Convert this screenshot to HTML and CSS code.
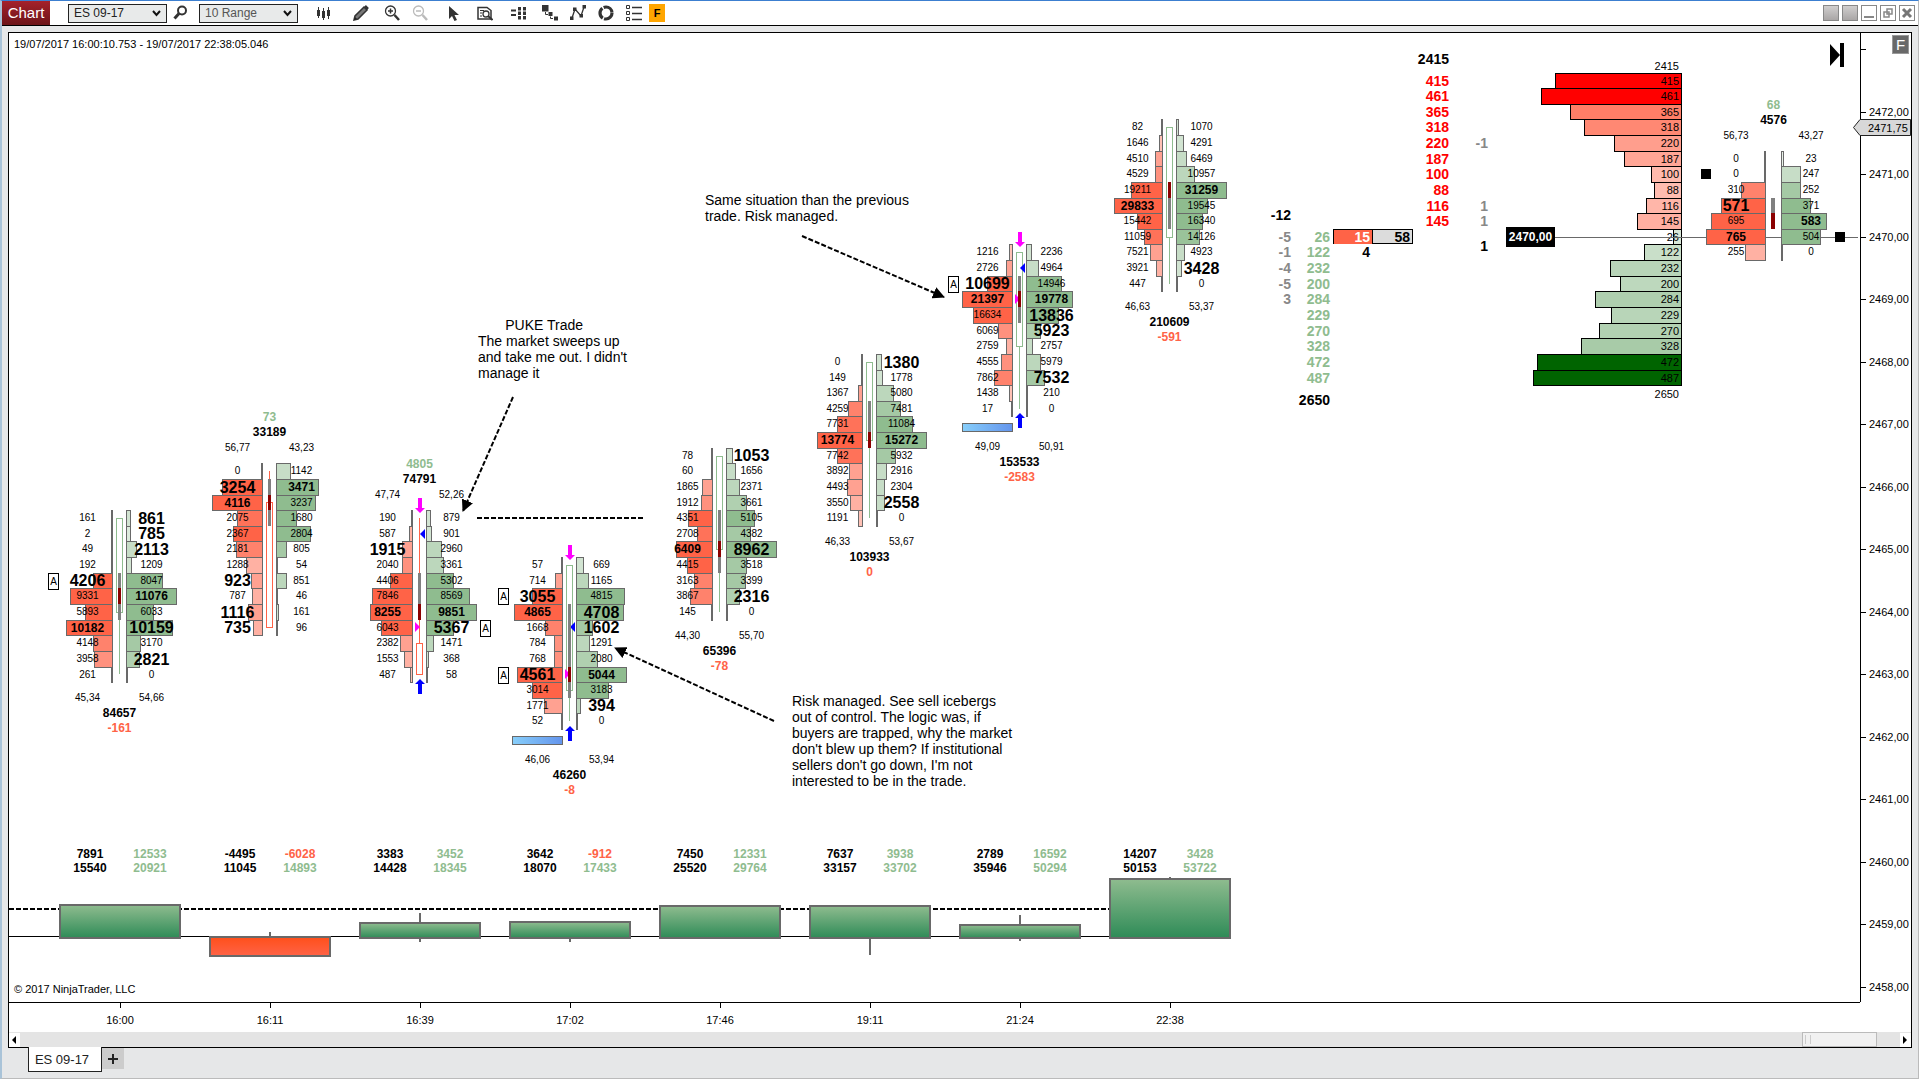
FILE: index.html
```html
<!DOCTYPE html>
<html lang="en">
<head>
    <meta charset="UTF-8">
    <meta name="viewport" content="width=device-width, initial-scale=1.0">
    <title>Chart - ES 09-17</title>
    <link rel="stylesheet" href="styles.css">
</head>
<body>
    <header class="toolbar">
        <h1 class="title">Chart</h1>
        <label class="dropdown instrument">
            <select aria-label="Instrument"><option>ES 09-17</option></select>
            <svg width="9" height="7" viewBox="0 0 9 7"><path d="M1 1l3.5 4L8 1" fill="none" stroke="#111" stroke-width="2"/></svg>
        </label>
        <button class="tool" aria-label="Search">
            <svg viewBox="0 0 16 16"><circle cx="10" cy="5.5" r="4" fill="none" stroke="#333" stroke-width="2"/><path d="M7 8.5L2.5 13.5" stroke="#333" stroke-width="3"/></svg>
        </button>
        <label class="dropdown range">
            <select aria-label="Interval"><option>10 Range</option></select>
            <svg width="9" height="7" viewBox="0 0 9 7"><path d="M1 1l3.5 4L8 1" fill="none" stroke="#111" stroke-width="2"/></svg>
        </label>

        <div class="tools">
            <button class="tool" aria-label="Chart style">
                <svg viewBox="0 0 16 16"><path d="M2.5 2v11M7.5 3v12M12.5 2v12" stroke="#333" stroke-width="1"/><path d="M2.5 5v6M7.5 6v7M12.5 5v6" stroke="#333" stroke-width="3"/></svg>
            </button>
            <button class="tool space-l" aria-label="Draw">
                <svg viewBox="0 0 16 16"><path d="M1 15l1-4 9-9 3 3-9 9z" fill="#777" stroke="#333" stroke-width="1.5"/><path d="M12 1l3 3" stroke="#333" stroke-width="2.5"/><path d="M1 15l1-3 2 2z" fill="#222"/></svg>
            </button>
            <button class="tool space-s" aria-label="Zoom in">
                <svg viewBox="0 0 16 16"><circle cx="6.5" cy="6" r="5" fill="none" stroke="#333" stroke-width="1.3"/><path d="M6.5 3.5v5M4 6h5" stroke="#333" stroke-width="1.5"/><path d="M10.5 10l4.5 5" stroke="#333" stroke-width="2.5"/></svg>
            </button>
            <button class="tool" aria-label="Zoom out" disabled>
                <svg viewBox="0 0 16 16"><circle cx="6.5" cy="6" r="5" fill="none" stroke="#bbb" stroke-width="1.3"/><path d="M4 6h5" stroke="#bbb" stroke-width="1.5"/><path d="M10.5 10l4.5 5" stroke="#bbb" stroke-width="2.5"/></svg>
            </button>
            <button class="tool space-m" aria-label="Cursor">
                <svg viewBox="0 0 16 16"><path d="M3 1v13l3-3 2.500 5 2.500-1-2.500-5H13z" fill="#333"/></svg>
            </button>
            <button class="tool space-s" aria-label="Data box">
                <svg viewBox="0 0 16 16"><path d="M1 2.5h9l4 3V14H1z" fill="none" stroke="#333" stroke-width="1.5"/><path d="M3 5.5h4M3 8h2M3 11h2" stroke="#333"/><circle cx="9" cy="9" r="3" fill="#fff" stroke="#333" stroke-width="1.3"/><path d="M11 11l4.5 4" stroke="#333" stroke-width="2"/></svg>
            </button>
            <button class="tool space-m" aria-label="Data series">
                <svg viewBox="0 0 16 16"><path d="M0 5.5h5M0 10h5" stroke="#333" stroke-width="2"/><path d="M8.500 2v13M13.500 2v13" stroke="#333" stroke-width="3" stroke-dasharray="3.500 1"/></svg>
            </button>
            <button class="tool space-s" aria-label="Strategies">
                <svg viewBox="0 0 16 16"><path d="M0 0h6.5v6.5H0zM6.500 7h4v4h-4zM12 11.5h4v4h-4z" fill="#333"/><path d="M3.5 7v2.5H6M8.500 11.500v2H11" fill="none" stroke="#333"/></svg>
            </button>
            <button class="tool" aria-label="Indicators">
                <svg viewBox="0 0 16 16"><path d="M2 13L5 4l6 7 3-9" fill="none" stroke="#333" stroke-width="1.3"/><path d="M0 11.500h3.500V15H0zM3 2.500h3.500V6H3zM9.500 9H13v3.500H9.500zM12.500 0H16v3.500h-3.500z" fill="#333"/></svg>
            </button>
            <button class="tool" aria-label="Sync">
                <svg viewBox="0 0 16 16"><circle cx="8" cy="8" r="6" fill="none" stroke="#333" stroke-width="3.2" stroke-dasharray="11.2 1.36"/></svg>
            </button>
            <button class="tool" aria-label="Properties">
                <svg viewBox="0 0 16 16"><path d="M.5.5h3v3h-3zM.5 6.5h3v3h-3zM.5 12.5h3v3h-3z" fill="none" stroke="#333"/><path d="M6 2.5h10M6 8.5h10M6 14.5h10" stroke="#333" stroke-width="1.5"/></svg>
            </button>
            <button class="flag">F</button>
        </div>

        <div class="window-buttons">
            <button class="shade" aria-label="Link colour"></button>
            <button class="shade" aria-label="Interval link"></button>
            <button aria-label="Minimize"><svg viewBox="0 0 12 12"><path d="M1 10h10" stroke="#888" stroke-width="2"/></svg></button>
            <button aria-label="Restore"><svg viewBox="0 0 12 12"><path d="M5 2h5v5H5zM2 5h5v5H2z" fill="none" stroke="#888" stroke-width="1.5"/></svg></button>
            <button aria-label="Close"><svg viewBox="0 0 12 12"><path d="M2 2l8 8M10 2l-8 8" stroke="#777" stroke-width="3"/></svg></button>
        </div>
    </header>

    <main class="workspace">
        <div class="frame">
            <section class="plot" id="plot">
                <p class="range-label">19/07/2017 16:00:10.753 - 19/07/2017 22:38:05.046</p>

                <!-- Drawing tools: arrows and dashed level -->
                <svg class="drawings">
                    <defs>
                        <marker id="head" markerUnits="userSpaceOnUse" markerWidth="12" markerHeight="12" refX="11" refY="6" orient="auto">
                            <path d="M0 0l12 6-12 6z"/>
                        </marker>
                    </defs>
                    <g stroke="#000" stroke-width="2" stroke-dasharray="5 2">
                        <path d="M793 203L935 264" marker-end="url(#head)"/>
                        <path d="M504 364L454 478" marker-end="url(#head)"/>
                        <path d="M765 688L606 615" marker-end="url(#head)"/>
                        <path d="M468 485H636"/>
                    </g>
                </svg>
                <p class="note note-puke">       PUKE Trade
The market sweeps up
and take me out. I didn't
manage it</p>
                <p class="note note-same">Same situation than the previous
trade. Risk managed.</p>
                <p class="note note-risk">Risk managed. See sell icebergs
out of control. The logic was, if
buyers are trapped, why the market
don't blew up them? If institutional
sellers don't go down, I'm not
interested to be in the trade.</p>

                <button class="go-last" aria-label="Go to last bar">
                    <svg width="14" height="24" viewBox="0 0 14 24"><path d="M0 1l10 11L0 23zM10 0h4v24h-4z"/></svg>
                </button>

                <section class="delta-panel">
                    <div class="columns" id="deltas"></div>
                    <svg class="delta-bars" id="deltaBars"></svg>
                    <p class="copyright">© 2017 NinjaTrader, LLC</p>
                </section>
            </section>

            <aside class="price-axis" id="priceAxis">
                <button class="fixed-scale">F</button>
                <div class="last-price">
                    <svg viewBox="0 0 58 17"><path d="M.5 8.5L7 .5h50.5v16H7z" fill="#d8d8d8" stroke="#222"/></svg>
                    <span>2471,75</span>
                </div>
            </aside>

            <div class="time-axis columns" id="timeAxis"></div>

            <div class="scrollbar">
                <button aria-label="Scroll left"><svg viewBox="0 0 10 14"><path d="M7 3v8L3 7z"/></svg></button>
                <div class="thumb"></div>
                <button aria-label="Scroll right"><svg viewBox="0 0 10 14"><path d="M3 3v8l4-4z"/></svg></button>
            </div>
        </div>
    </main>

    <footer class="tabs">
        <button class="tab">ES 09-17</button>
        <button class="add-tab" aria-label="Add tab"><svg viewBox="0 0 10 10"><path d="M5 0v10M0 5h10" stroke="#222" stroke-width="2"/></svg></button>
    </footer>

    <script src="chart.js"></script>
</body>
</html>
```

FILE: styles.css
```css
* {
    margin: 0;
    padding: 0;
    box-sizing: border-box;
    font-family: "Liberation Sans", Arial, sans-serif;
}

body {
    display: flex;
    flex-direction: column;
    height: 100vh;
    border-top: 1px solid #3c7fd0;
    border-right: 1px solid #bbb;
    border-bottom: 1px solid #bbb;
    border-left: 2px solid #a9c3d8;
    background-color: #e6e7e8;
    color: #000;
    font-size: 11px;
    overflow: hidden;
}

button {
    border: none;
    background: none;
}

svg {
    display: block;
}

/* Toolbar */
.toolbar {
    display: flex;
    align-items: center;
    height: 25px;
    background-color: #fff;
    border-bottom: 1px solid #000;
}

.title {
    align-self: stretch;
    width: 48px;
    margin-right: 18px;
    background: linear-gradient(#a5222b, #6d1418);
    color: #fff;
    font-size: 15px;
    font-weight: normal;
    line-height: 24px;
    text-align: center;
}

.dropdown {
    display: grid;
    align-items: center;
    width: 99px;
    height: 19px;
}

.dropdown select,
.dropdown svg {
    grid-area: 1 / 1;
}

.dropdown select {
    width: 100%;
    height: 19px;
    padding-left: 5px;
    appearance: none;
    border: 1px solid #222;
    border-radius: 0;
    background-color: #e8eaea;
    color: #222;
    font-size: 12px;
}

.dropdown svg {
    justify-self: end;
    margin-right: 6px;
    pointer-events: none;
}

.range select {
    color: #555;
}

.instrument + .tool {
    margin: 0 11px 0 5px;
}

.tool,
.tool svg {
    width: 16px;
    height: 16px;
}

.tools {
    display: flex;
    align-items: center;
    gap: 12px;
    margin-left: 18px;
}

.space-s {
    margin-left: 3px;
}

.space-m {
    margin-left: 6px;
}

.space-l {
    margin-left: 9px;
}

.flag {
    width: 16px;
    height: 18px;
    margin-left: -5px;
    background-color: #ffa500;
    font-size: 11px;
    font-weight: bold;
}

.window-buttons {
    display: flex;
    gap: 3px;
    margin-left: auto;
    margin-right: 3px;
}

.window-buttons button {
    width: 16px;
    height: 16px;
    padding: 1px;
    border: 1px solid #888;
}

.window-buttons .shade {
    background: linear-gradient(#d0cece, #a9a6a6);
}

/* Workspace */
.workspace {
    display: flex;
    flex: 1;
    min-height: 0;
    padding: 6px 6px 0;
}

.frame {
    flex: 1;
    display: grid;
    grid-template-columns: 1fr 51px;
    grid-template-rows: 1fr 30px 15px;
    border: 1px solid #000;
    background-color: #fff;
}

.plot {
    position: relative;
    display: flex;
    flex-direction: column;
    justify-content: space-between;
    min-width: 0;
    overflow: hidden;
}

.range-label {
    padding: 4px 5px;
    line-height: 14px;
}

.columns {
    display: grid;
    grid-template-columns: repeat(8, 150px);
    padding-left: 36px;
}

/* Drawings */
.drawings {
    position: absolute;
    inset: 0;
    width: 100%;
    height: 100%;
}

.note {
    position: absolute;
    font-size: 14px;
    line-height: 16px;
    white-space: pre;
}

.note-puke {
    left: 469px;
    top: 284px;
}

.note-same {
    left: 696px;
    top: 159px;
}

.note-risk {
    left: 783px;
    top: 660px;
}

.go-last {
    position: absolute;
    top: 10px;
    right: 16px;
}

/* Footprint bars */
.footprint {
    --side: 51px;
    position: absolute;
    width: 143px;
}

.footprint.wide {
    --side: 60px;
    width: 163px;
}

.above {
    margin-top: -53px;
}

.ladder-rows,
.percents {
    display: grid;
    grid-template-columns: 14px var(--side) 1fr var(--side) 14px;
}

.percents {
    padding-bottom: 1px;
    font-size: 10px;
    line-height: 15px;
    text-align: center;
}

.summary {
    display: flex;
    flex-direction: column;
    padding-top: 8px;
}

.above .summary {
    flex-direction: column-reverse;
    padding: 0 0 7px;
}

.percents :first-child {
    grid-column: 2;
}

.percents :last-child {
    grid-column: 4;
}

.total,
.delta {
    font-size: 12px;
    font-weight: bold;
    line-height: 15px;
    text-align: center;
}

.up {
    color: #8fbc8f;
}

.down {
    color: #ff6347;
}

.bid,
.ask {
    display: grid;
    grid-template-rows: 100%;
    align-items: center;
    font-size: 10px;
}

.bid {
    grid-column: 2;
}

.ask {
    grid-column: 4;
}

.bid span,
.ask span,
.bid i,
.ask i {
    grid-area: 1 / 1;
}

.bid span,
.ask span {
    z-index: 1;
    justify-self: center;
    line-height: 16px;
}

.bid i,
.ask i {
    align-self: stretch;
    margin-bottom: -1px;
    min-width: 2px;
    border: 1px solid #696969;
}

.bid i {
    justify-self: end;
}

.medium {
    font-size: 12px;
    font-weight: bold;
}

.large {
    padding-top: 1px;
    font-size: 16px;
    font-weight: bold;
}

.absorb {
    width: 11px;
    height: 17px;
    border: 1px solid #000;
    background-color: #fff;
    font-size: 10px;
    line-height: 15px;
    text-align: center;
}

.absorb.left {
    grid-column: 1;
}

.absorb.right {
    grid-column: 5;
    justify-self: end;
}

.candle {
    grid-column: 3;
    grid-row: 1 / -1;
    justify-self: center;
    width: 13px;
    height: 100%;
    overflow: visible;
}

.iceberg {
    width: 51px;
    height: 9px;
    margin: -1px 0 7px 14px;
    border: 1px solid #696969;
    background: linear-gradient(to right, #87cefa, #6495ed);
}

/* Order book profile */
.profile {
    position: absolute;
    right: 178px;
    line-height: 14px;
    text-align: right;
    margin-top: -14px;
}

.profile .rows {
    display: grid;
    justify-items: end;
}

.profile .end {
    padding-right: 3px;
}

.profile .bar {
    margin-bottom: -1px;
    border: 1px solid #000;
    display: flex;
    justify-content: flex-end;
    padding-right: 2px;
}

.profile .rows + .end {
    padding-top: 2px;
}

/* Depth of market */
.depth {
    position: absolute;
    right: 372px;
    margin-top: -22px;
    font-size: 14px;
    font-weight: bold;
    line-height: 16px;
    text-align: right;
}

.depth .row {
    display: grid;
    grid-template-columns: 40px 39px 83px 36px 39px;
}

.depth .total-row {
    height: 22px;
}

.depth .last-row {
    padding-top: 7px;
}

.change {
    color: #888;
}

.offer {
    color: #f00;
}

.sum {
    margin-top: -6px;
    color: #000;
}

.traded {
    display: grid;
    grid-template-columns: 1fr 1fr;
    margin-left: 3px;
    border: 1px solid #000;
    background-color: #dcdcdc;
    line-height: 14px;
}

.traded span {
    padding-right: 2px;
}

.traded span:first-child {
    border-right: 1px solid #000;
    background-color: #ff6347;
    color: #fff;
}

.trades {
    padding-right: 43px;
}

.price-line {
    position: absolute;
    right: 2px;
    width: 352px;
    display: flex;
    align-items: center;
    margin-top: -10px;
}

.price-line span {
    width: 49px;
    background-color: #000;
    color: #fff;
    font-size: 12px;
    font-weight: bold;
    line-height: 20px;
    text-align: center;
}

.price-line::after {
    content: "";
    flex: 1;
    border-top: 1px solid #696969;
}

.order {
    position: absolute;
    width: 10px;
    height: 10px;
    margin-top: -5px;
    background-color: #000;
}

/* Cumulative delta */
.delta-panel {
    height: 155px;
}

.delta-values {
    display: grid;
    grid-template-columns: 60px 60px;
    justify-content: center;
    font-size: 12px;
    font-weight: bold;
    line-height: 14px;
    text-align: center;
}

.delta-bars {
    width: 100%;
    height: 107px;
}

.copyright {
    padding-left: 5px;
    line-height: 14px;
}

/* Axes */
.price-axis {
    position: relative;
    border-left: 1px solid #000;
}

.price {
    position: absolute;
    left: 0;
    display: flex;
    align-items: center;
    gap: 3px;
    height: 14px;
    margin-top: -7px;
}

.price::before {
    content: "";
    width: 5px;
    border-top: 1px solid #000;
}

.last-price {
    position: absolute;
    top: 86px;
    right: 0;
    width: 58px;
}

.last-price svg,
.last-price span {
    width: 58px;
    height: 17px;
}

.last-price span {
    position: absolute;
    top: 0;
    padding-left: 15px;
    line-height: 18px;
}

.fixed-scale {
    position: absolute;
    top: 2px;
    right: 2px;
    width: 17px;
    height: 19px;
    border: 1px solid #999;
    background-color: #696969;
    color: #fff;
    font-size: 15px;
    line-height: 17px;
}

.time-axis {
    border-top: 1px solid #000;
    text-align: center;
}

.time-axis span::before {
    content: "";
    display: block;
    width: 1px;
    height: 5px;
    margin: 0 auto 6px;
    background-color: #000;
}

.scrollbar {
    grid-column: 1 / -1;
    display: flex;
    align-items: center;
    background-color: #e4e4e4;
}

.scrollbar button {
    width: 11px;
    height: 14px;
    background-color: #fff;
}

.scrollbar svg {
    height: 14px;
}

.thumb {
    width: 75px;
    height: 15px;
    margin: 0 23px 0 auto;
    padding: 2px;
    border: 1px solid #bbb;
    background-color: #f1f1f1;
}

.thumb::before {
    content: "";
    display: block;
    width: 4px;
    height: 9px;
    border-left: 1px solid #ccc;
    border-right: 1px solid #ccc;
}

/* Tabs */
.tabs {
    display: flex;
    align-items: flex-start;
    height: 30px;
    padding-left: 26px;
}

.tab {
    width: 74px;
    height: 25px;
    margin-top: -1px;
    padding-right: 6px;
    border: 1px solid #222;
    border-top: none;
    background-color: #fff;
    color: #222;
    font-size: 13px;
}

.add-tab {
    display: grid;
    place-items: center;
    width: 22px;
    height: 21px;
    background-color: #ccc;
}

.add-tab svg {
    width: 10px;
}
```

FILE: chart.js
```javascript
const POINT = 62.53;      // pixels per price point
const TICK = 0.25;
const TOP_PRICE = 2472;
const TOP_Y = 78.6;       // centre of TOP_PRICE inside the plot
const FIRST_X = 111;
const STEP_X = 150;

const plot = document.getElementById('plot');

const priceY = price => Math.round(TOP_Y + (TOP_PRICE - price) * POINT);
const rowTop = price => Math.round(TOP_Y + (TOP_PRICE - price - TICK / 2) * POINT);

function rowHeights(top, count) {
    const heights = [];
    for (let i = 0; i < count; i++) {
        heights.push(rowTop(top - (i + 1) * TICK) - rowTop(top - i * TICK) + 'px');
    }
    return heights.join(' ');
}

// Cell format: volume, size (M or L), fill strength after the colon.
// body / wick / area / poc are row numbers counted from the top price.
const bars = [
    { time: '16:00', top: 2465.5, total: 84657, delta: -161, pct: ['45,34', '54,66'], body: [0, 6], wick: [6, 10], up: true, area: [4, 7], poc: 5, absorb: { 4: 'left' },
      rows: ['161 861L:4', '2 785L:3', '49 2113L:5', '192 1209:4', '4206L:10 8047:10', '9331:10 11076M:10', '5893:10 6033:10', '10182M:10 10159L:10', '4148:8 3170:8', '3958:7 2821L:7', '261 0'] },
    { time: '16:11', top: 2466.25, total: 33189, delta: 73, pct: ['56,77', '43,23'], body: [2, 10], wick: [0, 2], up: false, area: [1, 4], poc: 2,
      rows: ['0 1142:5', '3254L:10 3471M:10', '4116M:10 3237:10', '2075:9 1680:10', '2367:10 2804:10', '2181:8 805:8', '1288:5 54', '923L:6 851:6', '787:5 46', '1116L:6 161:4', '735L:5 96'] },
    { time: '16:39', top: 2465.5, total: 74791, delta: 4805, pct: ['47,74', '52,26'], body: [8, 10], wick: [0, 8], up: false, area: [4, 7], poc: 6, buy: 1, sell: 7, arrows: true, absorb: { 7: 'right' },
      rows: ['190 879:4', '587:5 901:4', '1915L:6 2960:6', '2040:7 3361:6', '4406:10 5302:10', '7846:10 8569:10', '8255M:10 9851M:10', '6043:10 5367L:10', '2382:6 1471:6', '1553:5 368:4', '487:4 58'] },
    { time: '17:02', top: 2464.75, total: 46260, delta: -8, pct: ['46,06', '53,94'], body: [0, 8], wick: [8, 10], up: true, area: [3, 9], poc: 7, buy: 4, sell: 7, arrows: true, iceberg: true, absorb: { 2: 'left', 7: 'left' },
      rows: ['57 669:4', '714:6 1165:6', '3055L:10 4815:10', '4865M:10 4708L:10', '1668:8 1602L:8', '784:7 1291:6', '768:7 2080:7', '4561L:10 5044M:10', '3014:10 3183:10', '1771:6 394L:6', '52 0'] },
    { time: '17:46', top: 2466.5, total: 65396, delta: -78, pct: ['44,30', '55,70'], body: [0, 6], wick: [6, 10], up: true, area: [4, 8], poc: 6,
      rows: ['78 1053L:4', '60 1656:5', '1865:6 2371:6', '1912:7 3661:7', '4351:10 5105:10', '2708:9 4382:8', '6409M:10 8962L:10', '4415:10 3518:8', '3163:8 3399:8', '3867:8 2316L:7', '145 0'] },
    { time: '19:11', top: 2468, total: 103933, delta: 0, pct: ['46,33', '53,67'], body: [0, 5], wick: [5, 10], up: true, area: [3, 6], poc: 5,
      rows: ['0 1380L:4', '149 1778:4', '1367:6 5080:6', '4259:8 7481:8', '7731:9 11084:10', '13774M:10 15272M:10', '7742:9 5932:8', '3892:6 2916:5', '4493:6 2304:5', '3550:5 2558L:5', '1191:4 0'] },
    { time: '21:24', top: 2469.75, total: 153533, delta: -2583, pct: ['49,09', '50,91'], body: [0, 6], wick: [6, 10], up: true, area: [2, 5], poc: 3, buy: 1, sell: 3, arrows: true, iceberg: true, absorb: { 2: 'left' },
      rows: ['1216:4 2236:4', '2726:6 4964:5', '10699L:10 14946:10', '21397M:10 19778M:10', '16634:10 13836L:10', '6069:7 5923L:7', '2759:5 2757:5', '4555:7 5979:6', '7862:8 7532L:8', '1438:4 210', '17 0'] },
    { time: '22:38', top: 2471.75, total: 210609, delta: -591, pct: ['46,63', '53,37'], body: [0, 7], wick: [7, 10], up: true, area: [4, 7], poc: 4,
      rows: ['82 1070:4', '1646:4 4291:4', '4510:6 6469:5', '4529:7 10957:6', '19211:10 31259M:10', '29833M:10 19545:10', '15442:10 16340:10', '11059:9 14126:9', '7521:6 4923:5', '3921:5 3428L:4', '447 0'] }
];

// Bar in progress, kept at the right edge
const current = { top: 2471.25, total: 4576, delta: 68, pct: ['56,73', '43,27'], area: [3, 5], poc: 4, wide: true,
    rows: ['0 23:2', '0 247:5', '310:8 252:8', '571L:10 371:10', '695:10 583M:10', '765M:10 504:10', '255:5 0'] };

function parseCell(text) {
    const [, value, size, tone] = text.match(/^(\d+)([ML]?):?(\d*)$/);
    return { value: Number(value), size: { M: 'medium', L: 'large' }[size] || '', tone: Number(tone) / 10 };
}

function cellHtml(cell, side, row, max, width) {
    const color = side === 'bid' ? '255, 99, 71' : '143, 188, 143';
    const barWidth = Math.round(cell.value / max * width) + 1;
    return `<div class="${side}" style="grid-row: ${row + 1}">
        <i style="width: ${barWidth}px; background-color: rgba(${color}, ${cell.tone})"></i>
        <span class="${cell.size}">${cell.value}</span>
    </div>`;
}

function candleSvg(bar) {
    const base = rowTop(bar.top);
    const top = row => rowTop(bar.top - row * TICK) - base;
    const mid = row => priceY(bar.top - row * TICK) - base;
    const end = top(bar.rows.length);
    const color = bar.up ? '#8fbc8f' : '#ff6347';
    const areaX = bar.wide ? 4 : 5;
    const areaWidth = bar.wide ? 4 : 3;
    let svg = '';
    if (bar.body) {
        svg += `<path d="M6.5 ${mid(bar.wick[0])}V${mid(bar.wick[1])}" stroke="${color}"/>`;
        svg += `<rect x="3.5" y="${mid(bar.body[0]) + 0.5}" width="6" height="${mid(bar.body[1]) - mid(bar.body[0])}" fill="#fff" stroke="${color}"/>`;
    }
    if (bar.sell) svg += `<path d="M2 ${mid(bar.sell) - 5}l5 5-5 5z" fill="#f0f"/>`;
    if (bar.buy) svg += `<path d="M12 ${mid(bar.buy) - 5}l-5 5 5 5z" fill="#00f"/>`;
    svg += `<rect x="${areaX}" y="${top(bar.area[0])}" width="${areaWidth}" height="${top(bar.area[1]) - top(bar.area[0])}" fill="#808080"/>`;
    svg += `<rect x="${areaX}" y="${top(bar.poc)}" width="${areaWidth}" height="${top(bar.poc + 1) - top(bar.poc)}" fill="#8b0000"/>`;
    if (bar.arrows) {
        svg += '<path d="M5-12h4V-2h3L7 3 2-2h3z" fill="#f0f"/>';
        svg += `<path d="M5 ${end + 12}h4V${end + 2}h3l-5-5-5 5h3z" fill="#00f"/>`;
    }
    return `<svg class="candle">${svg}</svg>`;
}

function addFootprint(bar, side, offset) {
    const cells = bar.rows.map(row => row.split(' ').map(parseCell));
    const max = Math.max(...cells.flat().map(cell => cell.value));
    const width = bar.wide ? 59 : 50;
    const above = bar.delta > 0;

    let grid = cells.map(([bid, ask], i) => cellHtml(bid, 'bid', i, max, width) + cellHtml(ask, 'ask', i, max, width)).join('');
    for (const row in bar.absorb) {
        grid += `<div class="absorb ${bar.absorb[row]}" style="grid-row: ${Number(row) + 1}">A</div>`;
    }
    const rows = `<div class="ladder-rows" style="grid-template-rows: ${rowHeights(bar.top, cells.length)}">${grid}${candleSvg(bar)}</div>`;
    const summary = `<div class="summary">
        ${bar.iceberg ? '<div class="iceberg"></div>' : ''}
        <div class="percents"><span>${bar.pct[0]}</span><span>${bar.pct[1]}</span></div>
        <div class="total">${bar.total}</div>
        <div class="delta ${above ? 'up' : 'down'}">${bar.delta}</div>
    </div>`;

    const el = document.createElement('article');
    el.className = 'footprint' + (above ? ' above' : '') + (bar.wide ? ' wide' : '');
    el.style.top = rowTop(bar.top) + 'px';
    el.style[side] = offset + 'px';
    el.innerHTML = above ? summary + rows : rows + summary;
    plot.appendChild(el);
}

// Order book, best prices in the middle
const book = [415, 461, 365, 318, 220, 187, 100, 88, 116, 145, 26, 122, 232, 200, 284, 229, 270, 328, 472, 487];
const bookTop = 2472.5;
const offerChange = { 4: -1, 8: 1, 9: 1 };
const bidChange = { 10: -5, 11: -1, 12: -4, 13: -5, 14: 3 };

function addProfile() {
    const rows = book.map((size, i) => {
        const offer = i < 10;
        const alpha = 0.3 + size * 0.00145;
        let color = offer ? `rgba(255, 99, 71, ${alpha})` : `rgba(143, 188, 143, ${alpha})`;
        if (size > 400) color = offer ? '#f00' : '#006400';
        return `<div class="bar" style="width: ${Math.round(size * 0.3045) + 1}px; background-color: ${color}">${size}</div>`;
    }).join('');
    const el = document.createElement('div');
    el.className = 'profile';
    el.style.top = rowTop(bookTop) + 'px';
    el.innerHTML = `<div class="end">2415</div>
        <div class="rows" style="grid-template-rows: ${rowHeights(bookTop, book.length)}">${rows}</div>
        <div class="end">2650</div>`;
    plot.appendChild(el);
}

function addDepth() {
    const cell = (text, cls) => `<span class="${cls || ''}">${text === undefined ? '' : text}</span>`;
    const rows = book.map((size, i) => {
        const offer = i < 10;
        let middle = cell('');
        if (i === 10) middle = '<div class="traded"><span>15</span><span>58</span></div>';
        if (i === 11) middle = cell(4, 'trades');
        return (i === 9 ? cell(-12, 'sum') : cell(bidChange[i], 'change'))
            + cell(offer ? '' : size, 'up')
            + middle
            + cell(offer ? size : '', 'offer')
            + (i === 11 ? cell(1, 'sum') : cell(offerChange[i], 'change'));
    }).join('');
    const el = document.createElement('div');
    el.className = 'depth';
    el.style.top = rowTop(bookTop) + 'px';
    el.innerHTML = `<div class="row total-row">${cell('')}${cell('')}${cell('')}${cell(2415)}</div>
        <div class="row" style="grid-template-rows: ${rowHeights(bookTop, book.length)}">${rows}</div>
        <div class="row last-row">${cell('')}${cell(2650)}</div>`;
    plot.appendChild(el);
}

function addPriceLine() {
    const line = document.createElement('div');
    line.className = 'price-line';
    line.style.top = priceY(2470) + 'px';
    line.innerHTML = '<span>2470,00</span>';
    plot.appendChild(line);

    [[2471, 149], [2470, 15]].forEach(([price, right]) => {
        const order = document.createElement('div');
        order.className = 'order';
        order.style.top = priceY(price) + 'px';
        order.style.right = right + 'px';
        plot.appendChild(order);
    });
}

function addPriceAxis() {
    const axis = document.getElementById('priceAxis');
    for (let price = 2473; price >= 2458; price--) {
        const el = document.createElement('div');
        el.className = 'price';
        el.style.top = priceY(price) + 'px';
        el.textContent = price === 2473 ? '' : price + ',00';
        axis.prepend(el);
    }
}

// Session delta: four values, then box top/bottom and optional wicks
const deltas = [
    { values: [7891, 12533, 15540, 20921], box: [29, 64] },
    { values: [-4495, -6028, 11045, 14893], box: [61, 82], high: 57 },
    { values: [3383, 3452, 14428, 18345], box: [47, 64], high: 38, low: 67 },
    { values: [3642, -912, 18070, 17433], box: [46, 64], low: 67 },
    { values: [7450, 12331, 25520, 29764], box: [30, 64] },
    { values: [7637, 3938, 33157, 33702], box: [30, 64], low: 80 },
    { values: [2789, 16592, 35946, 50294], box: [49, 64], high: 40, low: 66 },
    { values: [14207, 3428, 50153, 53722], box: [3, 64], high: 2 }
];

function addDeltas() {
    document.getElementById('deltas').innerHTML = deltas.map(({ values }) => `<div class="delta-values">
        <span>${values[0]}</span><span class="${values[1] < 0 ? 'down' : 'up'}">${values[1]}</span>
        <span>${values[2]}</span><span class="up">${values[3]}</span>
    </div>`).join('');

    const boxes = deltas.map(({ values, box, high, low }, i) => {
        const x = FIRST_X + i * STEP_X;
        return `<path d="M${x} ${high || box[0]}V${low || box[1]}" stroke="#696969" stroke-width="2"/>
            <rect x="${x - 60}" y="${box[0] + 1}" width="120" height="${box[1] - box[0] - 2}" fill="url(#${values[0] < 0 ? 'sellFill' : 'buyFill'})" stroke="#696969" stroke-width="2"/>`;
    }).join('');
    document.getElementById('deltaBars').innerHTML = `<defs>
        <linearGradient id="buyFill" x2="0" y2="1"><stop stop-color="#8fbc8f"/><stop offset="1" stop-color="#2e8b57"/></linearGradient>
        <linearGradient id="sellFill" x2="0" y2="1"><stop stop-color="#ff4f1a"/><stop offset="1" stop-color="#ff6347"/></linearGradient>
        </defs>
        <path d="M0 34H1100" stroke="#000" stroke-width="2" stroke-dasharray="5 2"/>
        <path d="M0 61.5H1100" stroke="#000"/>${boxes}`;
}

addProfile();
addDepth();
addPriceLine();
bars.forEach((bar, i) => addFootprint(bar, 'left', FIRST_X + i * STEP_X - 72));
addFootprint(current, 'right', 5);
addPriceAxis();
addDeltas();
document.getElementById('timeAxis').innerHTML = bars.map(bar => `<span>${bar.time}</span>`).join('');
```
